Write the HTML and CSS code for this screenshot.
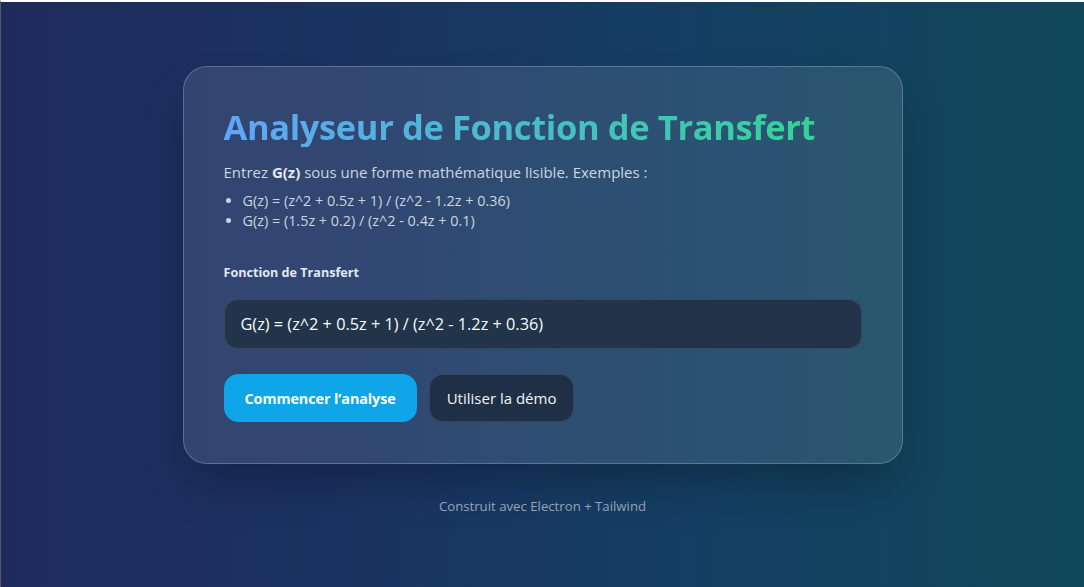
FILE: index.html
```html
<!DOCTYPE html>
<html lang="fr">
<head>
<meta charset="utf-8">
<title>Analyseur de Fonction de Transfert</title>
<link rel="stylesheet" href="styles.css">
</head>
<body>
<main class="page">
  <section class="card">
    <h1 class="title">Analyseur de Fonction de Transfert</h1>
    <p class="intro">Entrez <strong>G(z)</strong> sous une forme mathématique lisible. Exemples :</p>
    <ul class="examples">
      <li>G(z) = (z^2 + 0.5z + 1) / (z^2 - 1.2z + 0.36)</li>
      <li>G(z) = (1.5z + 0.2) / (z^2 - 0.4z + 0.1)</li>
    </ul>
    <label class="label" for="tf">Fonction de Transfert</label>
    <input id="tf" class="input" type="text" value="G(z) = (z^2 + 0.5z + 1) / (z^2 - 1.2z + 0.36)">
    <div class="actions">
      <button class="btn btn-primary">Commencer l’analyse</button>
      <button class="btn btn-secondary">Utiliser la démo</button>
    </div>
  </section>
  <footer class="footer">Construit avec Electron + Tailwind</footer>
</main>
</body>
</html>
```
FILE: styles.css
```css
* { box-sizing: border-box; }
html, body { height: 100%; }
body {
  margin: 0;
  font-family: "Open Sans", "Noto Sans", sans-serif;
  color: #e2e8f0;
  background: linear-gradient(90deg, #1e2a5e 0%, #1a3462 35%, #143f63 65%, #10475a 100%);
  border-top: 2px solid #ffffff;
  border-left: 1px solid #5c5c5c;
  overflow: hidden;
}
.page {
  display: flex;
  flex-direction: column;
  align-items: center;
  padding-top: 64px;
}
.card {
  width: 720px;
  padding: 40px 40px 41px;
  border: 1px solid rgba(255,255,255,0.22);
  border-radius: 24px;
  background: rgba(255,255,255,0.1);
  box-shadow: 0 25px 50px -12px rgba(0,0,0,0.3);
  display: flex;
  flex-direction: column;
  align-items: flex-start;
}
.title {
  margin: 0;
  font-size: 34.5px;
  letter-spacing: -0.38px;
  line-height: 40px;
  font-weight: 700;
  background: linear-gradient(90deg, #60a5fa, #34d399);
  -webkit-background-clip: text;
  background-clip: text;
  color: transparent;
}
.intro {
  margin: 14px 0 0;
  font-size: 15px;
  line-height: 22px;
  color: #cbd5e1;
}
.intro strong { color: #e2e8f0; }
.examples {
  margin: 8px 0 0;
  padding-left: 19px;
  font-size: 14.4px;
  line-height: 20px;
  color: #cbd5e1;
}
.examples li { padding-left: 0; }
.label {
  margin-top: 32px;
  font-size: 12.6px;
  line-height: 20px;
  font-weight: 700;
  color: #e2e8f0;
}
.input {
  margin-top: 16px;
  width: 100%;
  height: 50px;
  padding: 0 16px;
  border: 1px solid rgba(71,85,105,0.6);
  border-radius: 14px;
  background: #213449;
  color: #f8fafc;
  font-family: inherit;
  font-size: 16.3px;
  outline: none;
}
.actions {
  margin-top: 25px;
  display: flex;
  gap: 12px;
}
.btn {
  height: 48px;
  border-radius: 14px;
  font-family: inherit;
  cursor: pointer;
}
.btn-primary {
  padding: 0 20px;
  background: #0ea5e9;
  border: 1px solid #0ea5e9;
  color: #ffffff;
  font-weight: 700;
  font-size: 14.4px;
  letter-spacing: -0.1px;
}
.btn-secondary {
  padding: 0 17px;
  background: #1f2f46;
  border: 1px solid rgba(71,85,105,0.6);
  color: #f1f5f9;
  font-weight: 400;
  font-size: 15px;
}
.footer {
  margin-top: 32px;
  font-size: 13.2px;
  line-height: 20px;
  color: #94a3b8;
}
```
